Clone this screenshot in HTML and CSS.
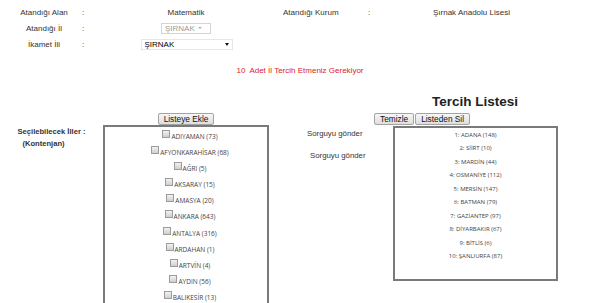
FILE: index.html
```html
<!DOCTYPE html>
<html lang="tr">
<head>
<meta charset="utf-8">
<title>Tercih</title>
<link rel="stylesheet" href="styles.css">
</head>
<body>
<div class="page">
  <div class="info">
    <div class="lbl">Atandığı Alan</div>
    <div class="colon">:</div>
    <div class="val">Matematik</div>
    <div class="lbl2">Atandığı Kurum</div>
    <div class="colon">:</div>
    <div class="val2">Şırnak Anadolu Lisesi</div>

    <div class="lbl">Atandığı İl</div>
    <div class="colon">:</div>
    <div class="val"><span class="sel sel-dis"><select disabled><option>ŞIRNAK</option></select></span></div>
    <div></div><div></div><div></div>

    <div class="lbl">İkamet İli</div>
    <div class="colon">:</div>
    <div class="val"><span class="sel sel-main"><select><option>ŞIRNAK</option></select></span></div>
    <div></div><div></div><div></div>
  </div>

  <p class="warn">10&nbsp; Adet İl Tercih Etmeniz Gerekiyor</p>

  <div class="pick">
    <div class="title">Tercih Listesi</div>

    <div class="btn-left"><button class="btn">Listeye Ekle</button></div>
    <div class="btn-right"><button class="btn">Temizle</button><button class="btn">Listeden Sil</button></div>

    <div class="side-label">
      <div>Seçilebilecek İller :</div>
      <div class="kont">(Kontenjan)</div>
    </div>

    <div class="box box-left">
      <ul class="cities">
        <li><span class="cb"></span>ADIYAMAN (73)</li>
        <li><span class="cb"></span>AFYONKARAHİSAR (68)</li>
        <li><span class="cb"></span>AĞRI (5)</li>
        <li><span class="cb"></span>AKSARAY (15)</li>
        <li><span class="cb"></span>AMASYA (20)</li>
        <li><span class="cb"></span>ANKARA (643)</li>
        <li><span class="cb"></span>ANTALYA (316)</li>
        <li><span class="cb"></span>ARDAHAN (1)</li>
        <li><span class="cb"></span>ARTVİN (4)</li>
        <li><span class="cb"></span>AYDIN (56)</li>
        <li><span class="cb"></span>BALIKESİR (13)</li>
      </ul>
    </div>

    <div class="submits">
      <button class="ghost g1">Sorguyu gönder</button>
      <button class="ghost g2">Sorguyu gönder</button>
    </div>

    <div class="box box-right">
      <ol class="prefs">
        <li>1: ADANA (148)</li>
        <li>2: SİİRT (10)</li>
        <li>3: MARDİN (44)</li>
        <li>4: OSMANİYE (112)</li>
        <li>5: MERSİN (147)</li>
        <li>6: BATMAN (79)</li>
        <li>7: GAZİANTEP (97)</li>
        <li>8: DİYARBAKIR (67)</li>
        <li>9: BİTLİS (6)</li>
        <li>10: ŞANLIURFA (87)</li>
      </ol>
    </div>
  </div>
</div>
</body>
</html>
```

FILE: styles.css
```css
* { box-sizing: border-box; }

body {
  margin: 0;
  background: #fff;
  font-family: "Liberation Sans", Arial, sans-serif;
  font-size: 8px;
  color: #333;
}

.page {
  width: 600px;
  height: 303px;
  overflow: hidden;
}

/* header info grid */
.info {
  display: grid;
  grid-template-columns: 72px 10px 192px 84px 66px 1fr;
  grid-auto-rows: 16px;
  align-items: center;
  padding: 4px 0 0 8px;
}

.lbl { text-align: center; }
.colon { padding-left: 2px; }
.val { text-align: center; }
.lbl2 { padding-left: 1px; }
.val2 { padding-left: 1px; }

.sel {
  position: relative;
  display: inline-block;
}

.sel select {
  -webkit-appearance: none;
  appearance: none;
  font-family: "Liberation Sans", Arial, sans-serif;
  font-size: 8px;
  height: 11px;
  line-height: 9px;
  padding: 0 0 0 3px;
  margin: 0;
  background: #fff;
  border-radius: 0;
  display: block;
}

.sel::after {
  content: "";
  position: absolute;
  top: 4px;
  width: 0;
  height: 0;
  border-left: 2px solid transparent;
  border-right: 2px solid transparent;
  pointer-events: none;
}

.sel-dis select {
  width: 50px;
  color: #9a9a9a;
  border: 1px solid #d4d4d4;
  opacity: 1;
}
.sel-dis::after {
  right: 9px;
  border-top: 2px solid #b0b0b0;
}

.sel-main select {
  width: 92px;
  color: #000;
  border: 1px solid #e6e6e6;
  margin-left: 1px;
}
.sel-main::after {
  right: 4px;
  border-top: 3px solid #111;
}

.warn {
  margin: 14px 0 0;
  text-align: center;
  color: #d9232d;
  line-height: 10px;
}

/* chooser area */
.pick {
  display: grid;
  grid-template-columns: 103px 166px 123px 166px;
  grid-template-rows: 16px 12px auto;
  row-gap: 0;
  margin-top: 18px;
}

.title {
  grid-column: 4;
  grid-row: 1;
  text-align: center;
  font-size: 13.5px;
  font-weight: bold;
  line-height: 16px;
  color: #222;
}

.btn-left {
  grid-column: 2;
  grid-row: 2;
  margin-top: 3px;
  text-align: center;
}

.btn-right {
  grid-column: 3 / 5;
  grid-row: 2;
  margin-top: 3px;
  padding-left: 105px;
  display: flex;
  gap: 1px;
}

.btn {
  font-family: "Liberation Sans", Arial, sans-serif;
  font-size: 8.3px;
  height: 12px;
  line-height: 10px;
  padding: 0 5px;
  margin: 0;
  color: #111;
  border: 1px solid #a4a4a4;
  border-radius: 2px;
  background: linear-gradient(#f7f7f7, #dedede);
}

.side-label {
  grid-column: 1;
  grid-row: 3;
  padding: 4px 0 0 0;
  text-align: center;
  font-weight: bold;
  font-size: 7.6px;
  line-height: 11.5px;
  color: #333;
}
.kont { padding-right: 16px; }

.box {
  border: 2px solid #7a7a7a;
  background: #fff;
  overflow: hidden;
}

.box-left {
  grid-column: 2;
  grid-row: 3;
  height: 200px;
  margin-top: 3px;
}

.cities {
  list-style: none;
  margin: 0;
  padding: 2px 0 0 8px;
  font-family: "Open Sans", sans-serif;
  font-size: 6.5px;
  color: #444;
  text-align: center;
}
.cities li {
  height: 16.1px;
  line-height: 16.1px;
}

.cb {
  display: inline-block;
  width: 8px;
  height: 8px;
  margin-right: 1px;
  vertical-align: 1px;
  border: 1px solid #9c9c9c;
  background: linear-gradient(#f2f2f2, #cfcfcf);
}

.submits {
  grid-column: 3;
  grid-row: 3;
  display: flex;
  flex-direction: column;
  align-items: flex-start;
}

.ghost {
  font-family: "Liberation Sans", Arial, sans-serif;
  font-size: 7.8px;
  line-height: 10px;
  color: #333;
  background: none;
  border: 0;
  padding: 0;
}
.g1 { margin: 7px 0 0 38px; }
.g2 { margin: 12px 0 0 41px; }

.box-right {
  grid-column: 4;
  grid-row: 3;
  height: 155px;
  margin-top: 4px;
  margin-left: 1px;
}

.prefs {
  list-style: none;
  margin: 0;
  padding: 1px 0 0;
  font-family: "Open Sans", sans-serif;
  font-size: 6px;
  color: #444;
  text-align: center;
}
.prefs li {
  height: 13.44px;
  line-height: 13.44px;
}
```
